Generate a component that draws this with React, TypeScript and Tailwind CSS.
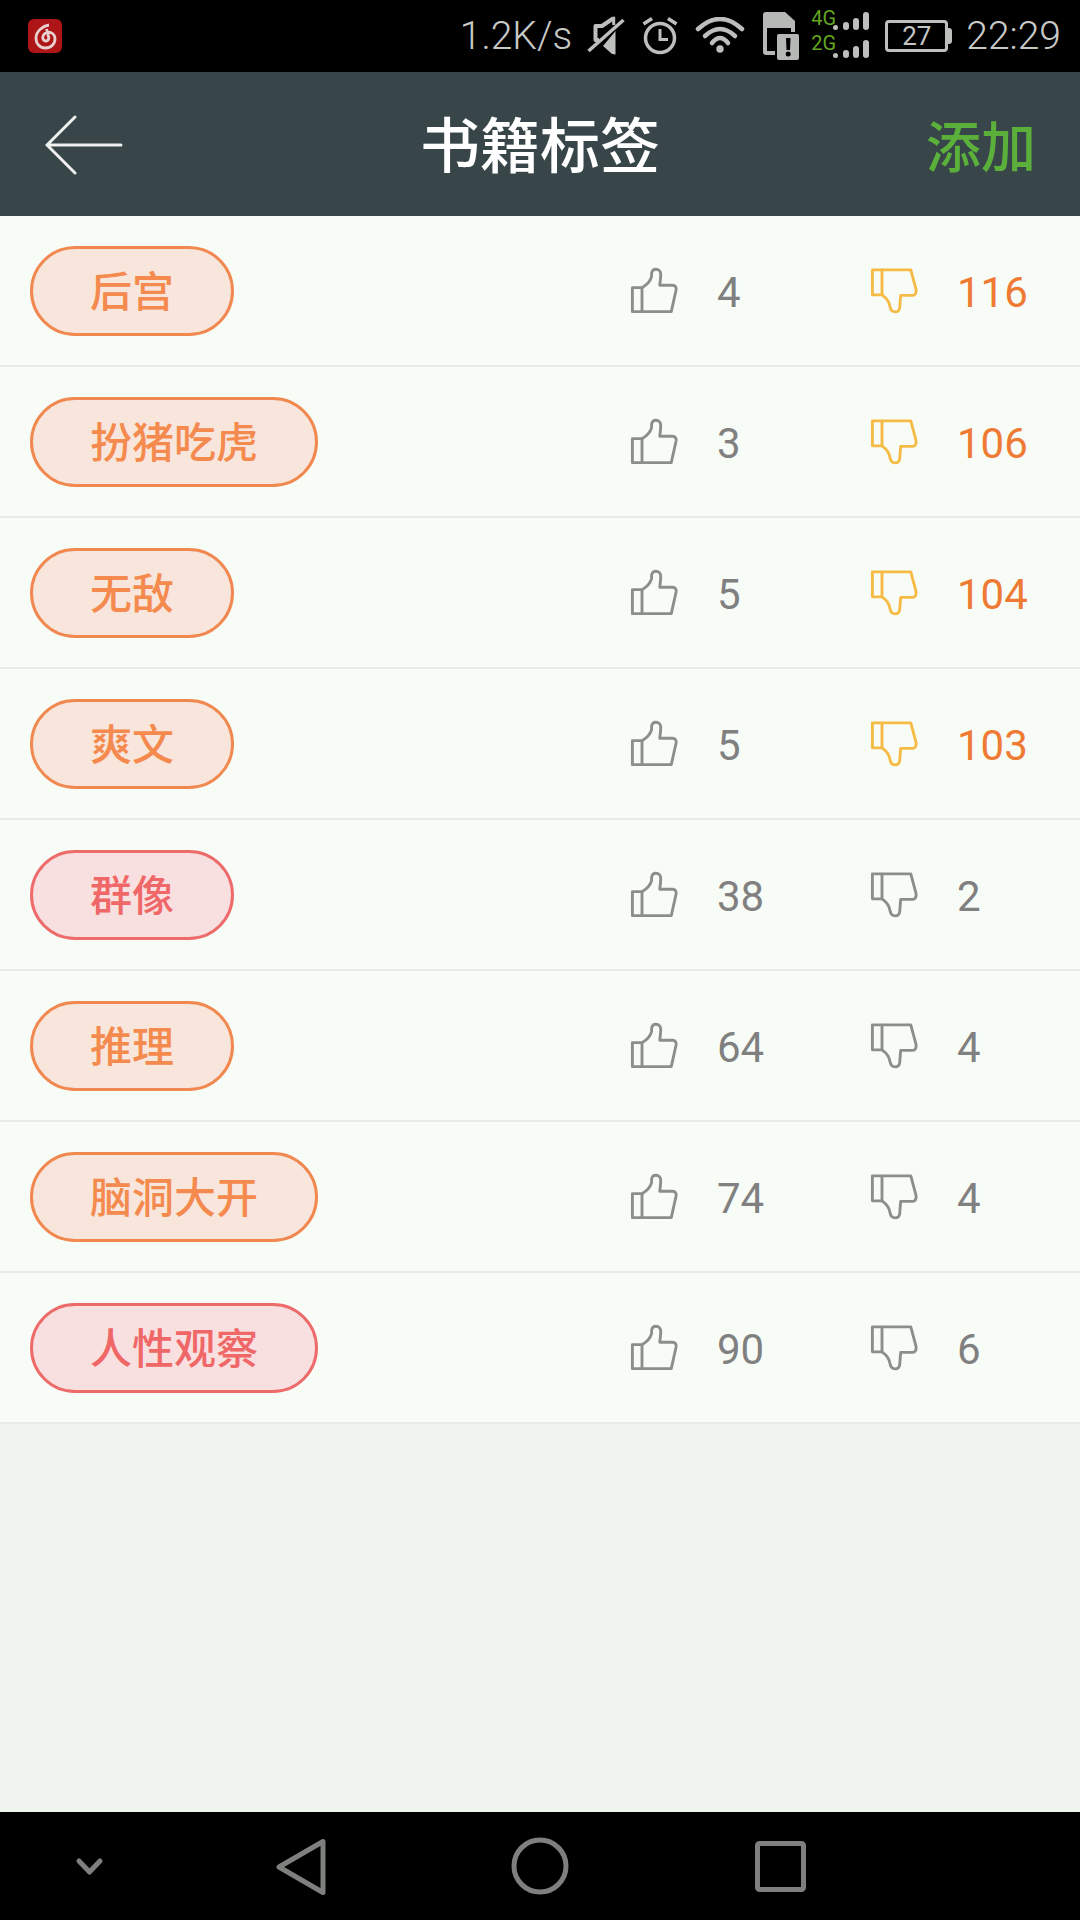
const tags = [
  { name: "后宫", up: 4, down: 116, tone: "orange" },
  { name: "扮猪吃虎", up: 3, down: 106, tone: "orange" },
  { name: "无敌", up: 5, down: 104, tone: "orange" },
  { name: "爽文", up: 5, down: 103, tone: "orange" },
  { name: "群像", up: 38, down: 2, tone: "red" },
  { name: "推理", up: 64, down: 4, tone: "orange" },
  { name: "脑洞大开", up: 74, down: 4, tone: "orange" },
  { name: "人性观察", up: 90, down: 6, tone: "red" },
];

const ThumbUp = () => (
  <svg width="48" height="48" viewBox="-1 -1 50 50" fill="none" stroke="#8c8e8c" strokeWidth="3" strokeLinejoin="round" className="mt-[1px]">
    <path d="M1.5 20.5H11.5V45.5H1.5Z" />
    <path d="M11.5 20.5C16 18 20 14 21.5 9V5.5C22 2.5 24 1.3 26 1.3C29 1.3 31 3.5 31 6.5C31 10 30.5 14 30 18H43.5C46 18 47.5 20 47 23L42 45.5H11.5" />
  </svg>
);

const ThumbDown = ({ hot }: { hot: boolean }) => (
  <svg width="48" height="48" viewBox="-1 -1 50 50" fill="none" stroke={hot ? "#f5bb45" : "#8c8e8c"} strokeWidth="3" strokeLinejoin="round" className="mt-[1px]">
    <path d="M1.5 2H11.5V28H1.5Z" />
    <path d="M11.5 2H41.5L47 22.5C47.5 26 46 28.5 43.5 28.5H31C30.5 33 30.3 37 30 41C29.7 44 27.8 45.7 25.2 45.7C22.5 45.7 20.6 44 20 41C19.5 36 16.5 31.5 11.5 28" />
  </svg>
);

const StatusIcons = () => (
  <>
    {/* muted speaker */}
    <svg width="38" height="40" viewBox="0 0 38 40" fill="none" className="ml-[15px]">
      <path d="M26 2.5L15 10H8.5V24H12" stroke="#bdbfbd" strokeWidth="4" strokeLinejoin="round" />
      <path d="M26.7 0.7V9" stroke="#bdbfbd" strokeWidth="3" />
      <path d="M28.5 15V38.5L25 38L16 30Z" fill="#bdbfbd" />
      <path d="M1.5 35L36.5 4" stroke="#bdbfbd" strokeWidth="3.5" />
    </svg>
    {/* alarm */}
    <svg width="38" height="40" viewBox="0 0 38 40" fill="none" stroke="#bdbfbd" className="ml-[16px]">
      <circle cx="19" cy="22" r="14.5" strokeWidth="3.5" />
      <path d="M19 13V23.5H27" strokeWidth="3" />
      <path d="M2.5 8L11 2.5M35.5 8L27 2.5" strokeWidth="3.5" />
    </svg>
    {/* wifi */}
    <svg width="50" height="38" viewBox="0 0 50 38" fill="none" stroke="#bdbfbd" strokeWidth="4.5" strokeLinecap="round" className="ml-[16px]">
      <path d="M3 12Q25 -8 47 12" />
      <path d="M10 19Q25 5 40 19" />
      <path d="M17 26Q25 16 33 26" />
      <circle cx="25" cy="32" r="3.7" fill="#bdbfbd" stroke="none" />
    </svg>
    {/* sim with warning */}
    <svg width="38" height="50" viewBox="0 0 38 50" className="ml-[16px]">
      <path d="M2 4Q2 1 5 1H24L34 10V44H5Q2 44 2 41Z" fill="#b5b8b5" />
      <path d="M6 17H30V40H6Z" fill="#000" />
      <path d="M14 21H34V23H38V50H14Z" fill="#000" />
      <path d="M16 25Q16 23 18 23H36Q38 23 38 25V47Q38 49 36 49H18Q16 49 16 47Z" fill="#b5b8b5" />
      <path d="M25 27H29.5L29 39H25.5Z" fill="#000" />
      <circle cx="27.2" cy="43" r="2.5" fill="#000" />
    </svg>
    {/* dual signal */}
    <div className="relative ml-[12px] w-[58px] h-[50px]">
      <span className="absolute left-0 top-[-3px] text-[20px] leading-[20px] text-[#62a51f]">4G</span>
      <span className="absolute left-0 top-[22px] text-[20px] leading-[20px] text-[#62a51f]">2G</span>
      <svg width="36" height="50" viewBox="0 0 36 50" fill="#bdbfbd" className="absolute right-0 top-0">
        <rect x="0" y="14" width="5" height="5" rx="2.5" />
        <rect x="10" y="11" width="6" height="8" rx="3" />
        <rect x="20" y="7" width="6" height="12" rx="3" />
        <rect x="30" y="1" width="6" height="18" rx="3" />
        <rect x="0" y="42" width="5" height="5" rx="2.5" />
        <rect x="10" y="39" width="6" height="8" rx="3" />
        <rect x="20" y="35" width="6" height="12" rx="3" />
        <rect x="30" y="29" width="6" height="18" rx="3" />
      </svg>
    </div>
    {/* battery */}
    <div className="ml-[16px] flex items-center">
      <div className="w-[63px] h-[32px] rounded-[4px] border-[3px] border-[#bdbfbd] flex items-center justify-center text-[26px] leading-none text-[#c4c6c4]">
        27
      </div>
      <div className="w-[4px] h-[16px] rounded-r-[3px] bg-[#bdbfbd]" />
    </div>
  </>
);

export default function App() {
  return (
    <div className="w-[1080px] h-[1920px] flex flex-col bg-[#eff4ef] overflow-hidden font-['Roboto','Noto_Sans_CJK_SC',sans-serif]">
      {/* status bar */}
      <div className="h-[72px] bg-black flex items-center pl-[28px] pr-[19px] shrink-0">
        <div className="w-[34px] h-[34px] rounded-[6px] bg-[#ad1516] flex items-center justify-center">
          <svg width="27" height="27" viewBox="0 0 27 27" fill="none" stroke="#e8cfcf" strokeWidth="2.8">
            <path d="M17 2C11 3 4 8 4 15C4 21 8 25 13.5 25C19 25 23 21 23 16C23 11 19 8.5 15 9.5C12 10.2 10 13 11 16C11.7 18 14 18.5 15.5 17.5C17 16.5 17 14 16 12L14.5 6" />
          </svg>
        </div>
        <span className="ml-auto text-[39px] leading-none font-light text-[#c8cac8]">1.2K/s</span>
        <StatusIcons />
        <span className="ml-[14px] text-[39px] leading-none font-light text-[#c8cac8]">22:29</span>
      </div>

      {/* app bar */}
      <div className="h-[144px] bg-[#384549] shrink-0 flex items-center justify-between pl-[45px] pr-[44px] relative">
        <svg width="78" height="60" viewBox="0 0 78 60" fill="none" stroke="#eef1ee" strokeWidth="3" strokeLinecap="round" className="mb-[-1px]">
          <path d="M76 30H3M30 2L2 30L30 58" />
        </svg>
        <h1 className="absolute left-0 right-0 text-center text-[60px] leading-none font-medium text-white pt-[8px]">书籍标签</h1>
        <span className="text-[55px] leading-none font-medium text-[#5bb03b] pt-[8px]">添加</span>
      </div>

      {/* tag list */}
      <div className="bg-[#f8fcf7]">
        {tags.map((t) => {
          const red = t.tone === "red";
          const hot = t.down > 100;
          return (
            <div key={t.name} className="h-[151px] border-b-2 border-[#e6ebe6] flex items-center pl-[30px]">
              <div className="flex-1">
                <span
                  className={
                    red
                      ? "inline-flex h-[90px] items-center px-[57px] pt-[5px] rounded-full border-[3px] border-[#ee6b6b] bg-[#f9e0e0] text-[#ef6767] text-[42px] leading-none font-medium"
                      : "inline-flex h-[90px] items-center px-[57px] pt-[5px] rounded-full border-[3px] border-[#f0884f] bg-[#f8e6dc] text-[#f48a4e] text-[42px] leading-none font-medium"
                  }
                >
                  {t.name}
                </span>
              </div>
              <div className="w-[240px] flex items-center">
                <ThumbUp />
                <span className="ml-[39px] pt-[5px] text-[42px] leading-none text-[#808080]">{t.up}</span>
              </div>
              <div className="w-[210px] flex items-center">
                <ThumbDown hot={hot} />
                <span className={hot ? "ml-[39px] pt-[5px] text-[42px] leading-none text-[#ee7a33]" : "ml-[39px] pt-[5px] text-[42px] leading-none text-[#808080]"}>
                  {t.down}
                </span>
              </div>
            </div>
          );
        })}
      </div>

      <div className="flex-1" />

      {/* nav bar */}
      <div className="h-[108px] bg-black shrink-0">
        <svg width="1080" height="108" viewBox="0 0 1080 108" fill="none" stroke="#7d807d" className="block">
          <path d="M79 49L89.5 60L100 49" strokeWidth="5" strokeLinejoin="round" strokeLinecap="round" />
          <path d="M323 29.5V80.5L279 55Z" strokeWidth="5" strokeLinejoin="round" />
          <circle cx="540" cy="54" r="26" strokeWidth="5" />
          <rect x="757.5" y="31.5" width="46" height="46" rx="2" strokeWidth="5" />
        </svg>
      </div>
    </div>
  );
}
